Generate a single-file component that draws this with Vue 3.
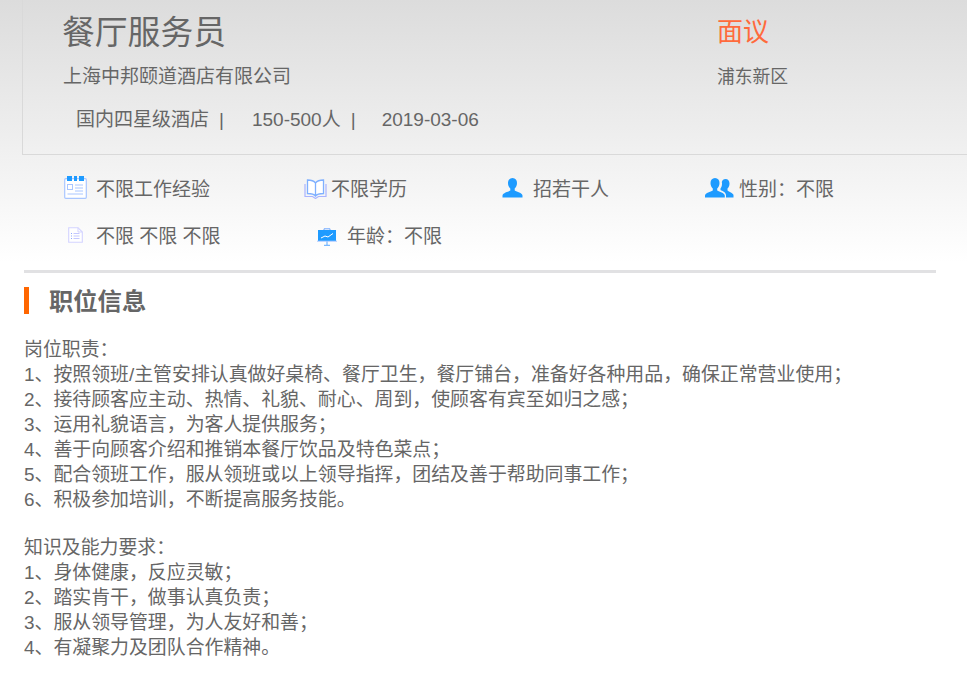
<script setup>
const duties = [
  '岗位职责：',
  '1、按照领班/主管安排认真做好桌椅、餐厅卫生，餐厅铺台，准备好各种用品，确保正常营业使用；',
  '2、接待顾客应主动、热情、礼貌、耐心、周到，使顾客有宾至如归之感；',
  '3、运用礼貌语言，为客人提供服务；',
  '4、善于向顾客介绍和推销本餐厅饮品及特色菜点；',
  '5、配合领班工作，服从领班或以上领导指挥，团结及善于帮助同事工作；',
  '6、积极参加培训，不断提高服务技能。',
]
const skills = [
  '知识及能力要求：',
  '1、身体健康，反应灵敏；',
  '2、踏实肯干，做事认真负责；',
  '3、服从领导管理，为人友好和善；',
  '4、有凝聚力及团队合作精神。',
]
</script>

<template>
  <div class="page">
    <div class="top">
      <div class="box">
        <div class="col-left">
          <h1 class="title">餐厅服务员</h1>
          <div class="company">上海中邦颐道酒店有限公司</div>
          <div class="meta">
            <span>国内四星级酒店</span><span class="sep">|</span><span class="size">150-500人</span><span class="sep2">|</span><span class="date">2019-03-06</span>
          </div>
        </div>
        <div class="col-right">
          <div class="salary">面议</div>
          <div class="area">浦东新区</div>
        </div>
      </div>
      <div class="tags one">
        <div class="tag t1">
          <svg class="ic i-exp" viewBox="0 0 23 23" width="23" height="23">
            <rect x="0.7" y="2.7" width="21.6" height="19.6" rx="1" fill="#fff" stroke="#a9c6ff" stroke-width="1.2"/>
            <path d="M3 0h5v5H3zM10 0h3v5h-3zM15 0h5v5h-5z" fill="#1e9bff"/>
            <rect x="3.500" y="8.500" width="5" height="5" fill="none" stroke="#a9c6ff"/>
            <path d="M11 9h8M11 12h8M11 15h8M3.500 18h15.500" stroke="#a9c6ff" fill="none"/>
          </svg>
          <span>不限工作经验</span>
        </div>
        <div class="tag t2">
          <svg class="ic i-book" viewBox="0 0 23 20" width="23" height="20">
            <path d="M11.500 4C10 2 7 1 3.500 1V14.500C7 14.500 10 15 11.500 17C13 15 16 14.500 19.500 14.500V1C16 1 13 2 11.500 4ZM11.500 4V17" fill="#fff" stroke="#7fb0ff" stroke-width="1.300"/>
            <path d="M1 5V17.500H8.500L11.500 19.500L14.500 17.500H22V5" fill="none" stroke="#a9b4ff" stroke-width="1.200"/>
          </svg>
          <span>不限学历</span>
        </div>
        <div class="tag t3">
          <svg class="ic i-man" viewBox="0 0 21 20" width="21" height="20">
            <path d="M10.500 0C7.500 0 6 2.200 6 5C6 7.500 7 9.500 8.300 10.500V12.500C6 14 1 14.500 0.500 17.500V19.500H20.500V17.500C20 14.500 15 14 12.700 12.500V10.500C14 9.500 15 7.500 15 5C15 2.200 13.500 0 10.500 0Z" fill="#1e9bff"/>
          </svg>
          <span>招若干人</span>
        </div>
        <div class="tag t4">
          <svg class="ic i-men" viewBox="0 0 29 20" width="29" height="20">
            <path d="M20.500 1C18.600 1 17.300 2.300 16.800 4C17.300 6 17 8.500 15.500 10.500V12C17.500 13 20.500 14 21 17V19.500H28.500V17C28 15 24 14 22.500 12.500V10.500C23.500 9.500 24.500 8 24.500 5.500C24.500 3 23 1 20.500 1Z" fill="#1e9bff"/>
            <path d="M10 0C7 0 5.500 2.200 5.500 5C5.500 7.500 6.500 9.500 7.800 10.500V12.500C5.500 14 0.500 14.500 0 17.500V19.500H19.800V17.500C19.300 14.500 14.500 14 12.200 12.500V10.500C13.500 9.500 14.500 7.500 14.500 5C14.500 2.200 13 0 10 0Z" fill="#1e9bff"/>
          </svg>
          <span>性别：不限</span>
        </div>
      </div>
      <div class="tags two">
        <div class="tag t5">
          <svg class="ic i-doc" viewBox="0 0 15 16" width="15" height="16">
            <path d="M0.700 0.700H10L14.300 5V15.300H0.700Z" fill="#fff" stroke="#d3d3ff" stroke-width="1.100"/>
            <path d="M10 0.700V5H14.300" fill="none" stroke="#d3d3ff"/>
            <path d="M3 6.500h1M3 9h1M3 11.500h1" stroke="#8fa8ff" fill="none"/>
            <path d="M5.500 6.500h6M5.500 9h6M5.500 11.500h6" stroke="#c4c8ff" fill="none"/>
          </svg>
          <span>不限 不限 不限</span>
        </div>
        <div class="tag t6">
          <svg class="ic i-board" viewBox="0 0 20 18" width="20" height="18">
            <path d="M7 2.500V0.800H13V2.500" fill="none" stroke="#6fa8ff"/>
            <rect x="1" y="2" width="18" height="11" fill="#1e9bff"/>
            <path d="M0 13.200H20" stroke="#a9c6ff"/>
            <path d="M4 10L8 8L11 9L16 5.500" fill="none" stroke="#fff"/>
            <path d="M10 13.500V17M7 17.300H13" stroke="#5aa8ff" fill="none"/>
          </svg>
          <span>年龄：不限</span>
        </div>
      </div>
    </div>
    <div class="main">
      <div class="rule"></div>
      <h2 class="head">职位信息</h2>
      <div class="para">
        <div v-for="l in duties" :key="l">{{ l }}</div>
      </div>
      <div class="para second">
        <div v-for="l in skills" :key="l">{{ l }}</div>
      </div>
    </div>
  </div>
</template>

<style>
html, body { margin: 0; background: #fff; }
</style>

<style scoped>
.page {
  width: 967px;
  height: 675px;
  overflow: hidden;
  font-family: "Liberation Sans", "Noto Sans CJK SC", sans-serif;
  color: #666;
  background: #fff;
}
.top {
  height: 270px;
  background: linear-gradient(#dcdcdc, #fff 262px);
}
.box {
  margin-left: 22px;
  height: 154px;
  border-left: 1px solid #d9d9d9;
  border-bottom: 1px solid #d9d9d9;
  display: flex;
  padding-left: 39px;
}
.col-left { width: 655px; }
.title {
  margin: 0;
  padding-top: 12px;
  font-size: 32.800px;
  line-height: 42px;
  font-weight: 400;
}
.company {
  margin-top: 10px;
  font-size: 19px;
  line-height: 26px;
  margin-left: 1px;
}
.meta {
  margin-top: 17px;
  padding-left: 14px;
  font-size: 19px;
  line-height: 26px;
  display: flex;
}
.sep { margin-left: 10px; }
.size { margin-left: 28px; }
.sep2 { margin-left: 10px; }
.date { margin-left: 26px; }
.salary {
  padding-top: 13px;
  font-size: 26px;
  line-height: 38px;
  color: #ff6a3c;
}
.area {
  margin-top: 13px;
  font-size: 17.800px;
  line-height: 26px;
}
.tags {
  display: flex;
  font-size: 19px;
  line-height: 26px;
}
.one { padding: 22px 0 0 64px; }
.two { padding: 21px 0 0 68px; }
.tag { display: flex; align-items: center; }
.t1 { width: 240px; }
.t2 { width: 198px; }
.t3 { width: 203px; }
.t5 { width: 249px; }
.ic { flex: none; }
.i-exp { margin-right: 9px; margin-top: -5px; }
.i-book { margin-right: 4px; margin-top: -3px; }
.i-man { margin-right: 10px; margin-top: -5px; }
.i-men { margin-right: 5px; margin-top: -5px; }
.i-doc { margin-right: 13px; margin-top: -4px; }
.i-board { margin-right: 10px; margin-top: 0; }
.main { padding: 0 31px 0 24px; }
.rule { height: 3px; background: #e1e1e3; }
.head {
  margin: 14px 0 0;
  height: 27px;
  border-left: 5px solid #ff6600;
  padding-left: 20px;
  font-size: 24.300px;
  line-height: 29px;
  font-weight: 700;
}
.para {
  margin-top: 23px;
  font-size: 18.900px;
  line-height: 25px;
}
.second { margin-top: 23px; }
</style>
